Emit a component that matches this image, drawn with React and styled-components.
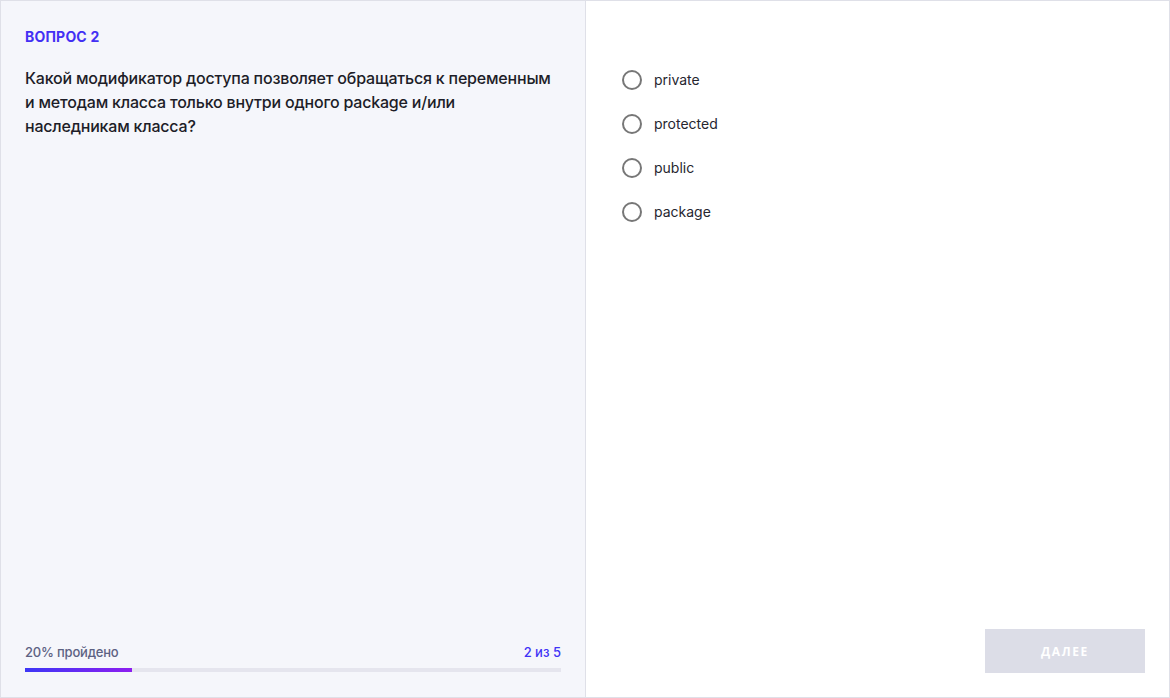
import styled, { createGlobalStyle } from 'styled-components';

const Global = createGlobalStyle`
  html, body {
    margin: 0;
    padding: 0;
    background: #ffffff;
  }
  * {
    box-sizing: border-box;
  }
`;

const Frame = styled.div`
  width: 1170px;
  height: 698px;
  border: 1px solid #dfe0e8;
  display: flex;
  font-family: Inter, "Noto Sans", sans-serif;
`;

const QuestionPane = styled.div`
  width: 585px;
  flex-shrink: 0;
  background: #f5f6fb;
  border-right: 1px solid #dfe0e8;
  padding: 28px 24px 25px 24px;
  display: flex;
  flex-direction: column;
`;

const Label = styled.div`
  font-size: 14px;
  line-height: 16px;
  font-weight: 700;
  color: #4330f4;
  letter-spacing: 0.2px;
`;

const Question = styled.p`
  margin: 21px 0 0 0;
  font-size: 16px;
  line-height: 24px;
  font-weight: 500;
  color: #1d1d28;
  letter-spacing: -0.2px;
  max-width: 540px;
`;

const Progress = styled.div`
  margin-top: auto;
  display: flex;
  flex-direction: column;
  gap: 8px;
`;

const ProgressHead = styled.div`
  display: flex;
  justify-content: space-between;
  font-size: 13px;
  line-height: 16px;
  font-weight: 500;
`;

const Done = styled.span`
  color: #5d6283;
  letter-spacing: -0.2px;
`;

const Count = styled.span`
  color: #3f33f6;
`;

const Track = styled.div`
  height: 4px;
  background: #e5e5ee;
`;

const Fill = styled.div`
  height: 100%;
  background: linear-gradient(90deg, #3d36f6 0%, #8d1ef0 100%);
`;

const AnswerPane = styled.div`
  flex: 1;
  padding: 69px 24px 24px 36px;
  display: flex;
  flex-direction: column;
`;

const Options = styled.div`
  display: flex;
  flex-direction: column;
  gap: 24px;
`;

const Option = styled.label`
  display: flex;
  align-items: center;
  gap: 12px;
  height: 20px;
  line-height: 18px;
  cursor: pointer;
  font-size: 14px;
  color: #262630;
`;

const Radio = styled.span`
  width: 20px;
  height: 20px;
  border-radius: 50%;
  border: 2px solid #777777;
  flex-shrink: 0;
`;

const Footer = styled.div`
  margin-top: auto;
  display: flex;
  justify-content: flex-end;
`;

const NextButton = styled.button`
  width: 160px;
  height: 44px;
  border: none;
  background: #dcdde7;
  color: #ffffff;
  font-family: "Open Sans", sans-serif;
  font-weight: 700;
  font-size: 12px;
  letter-spacing: 1.6px;
  cursor: default;
`;

const answers = ['private', 'protected', 'public', 'package'];

export default function App() {
  const current = 2;
  const total = 5;
  const percent = 20;
  return (
    <>
      <Global />
      <Frame>
        <QuestionPane>
          <Label>ВОПРОС {current}</Label>
          <Question>
            Какой модификатор доступа позволяет обращаться к переменным и методам класса только внутри одного package и/или наследникам класса?
          </Question>
          <Progress>
            <ProgressHead>
              <Done>{percent}% пройдено</Done>
              <Count>{current} из {total}</Count>
            </ProgressHead>
            <Track>
              <Fill style={{ width: `${percent}%` }} />
            </Track>
          </Progress>
        </QuestionPane>
        <AnswerPane>
          <Options>
            {answers.map((a) => (
              <Option key={a}>
                <Radio />
                {a}
              </Option>
            ))}
          </Options>
          <Footer>
            <NextButton disabled>ДАЛЕЕ</NextButton>
          </Footer>
        </AnswerPane>
      </Frame>
    </>
  );
}
